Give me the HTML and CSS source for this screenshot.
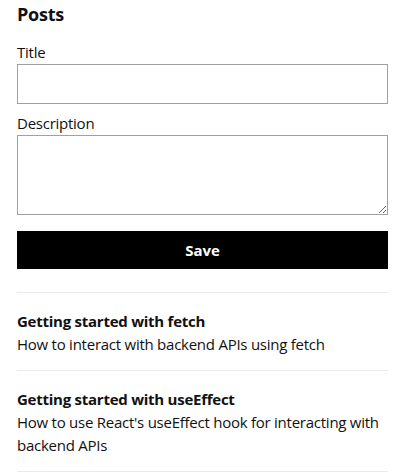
FILE: index.html
```html
<!DOCTYPE html>
<html>
<head>
<meta charset="utf-8">
<link rel="stylesheet" href="styles.css">
</head>
<body>
<div class="page">
  <h1 class="heading">Posts</h1>
  <form class="form">
    <label class="label" for="title">Title</label>
    <input class="input" id="title" type="text">
    <label class="label" for="desc">Description</label>
    <textarea class="textarea" id="desc"></textarea>
    <button class="save" type="button">Save</button>
  </form>
  <ul class="posts">
    <li class="post">
      <div class="post-title">Getting started with fetch</div>
      <div class="post-desc">How to interact with backend APIs using fetch</div>
    </li>
    <li class="post">
      <div class="post-title">Getting started with useEffect</div>
      <div class="post-desc">How to use React's useEffect hook for interacting with backend APIs</div>
    </li>
  </ul>
</div>
</body>
</html>
```
FILE: styles.css
```css
html, body { margin: 0; padding: 0; background: #fff; }
body { font-family: "Open Sans", "Noto Sans", sans-serif; color: #111; letter-spacing: -0.25px; }
.page { padding: 1px 17px 0 17px; }
.heading { font-size: 18px; font-weight: 700; margin: 0 0 14px 0; line-height: 26px; }
.form { display: flex; flex-direction: column; }
.label { font-size: 15px; line-height: 22px; margin-bottom: 1px; }
.input { height: 40px; box-sizing: border-box; border: 1px solid #a0a0a0; margin: 0 0 8px 0; padding: 4px; font: inherit; }
.textarea { height: 80px; box-sizing: border-box; border: 1px solid #a0a0a0; margin: 0; padding: 4px; font: inherit; resize: vertical; }
.save { margin-top: 16px; height: 38px; background: #000; color: #fff; border: none; font: inherit; font-size: 15px; font-weight: 700; }
.posts { list-style: none; margin: 23px 0 0 0; padding: 0; }
.post { border-top: 1px solid #eaeaea; padding: 17px 0 14px 0; }
.post:last-child { border-bottom: 1px solid #eaeaea; }
.post-title { font-size: 15px; font-weight: 700; line-height: 23px; }
.post-desc { font-size: 15px; line-height: 23px; }
```
